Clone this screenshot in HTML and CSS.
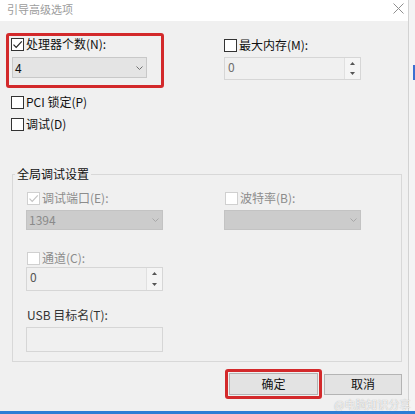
FILE: index.html
```html
<!DOCTYPE html>
<html lang="zh-CN">
<head>
<meta charset="utf-8">
<title>引导高级选项</title>
<link rel="stylesheet" href="styles.css">
</head>
<body>
<div class="screen">
  <div class="frame">
    <div class="window">
      <div class="titlebar">
        <span class="title">引导高级选项</span>
        <svg class="close" viewBox="0 0 11 11"><path d="M0.5 0.5L10.5 10.5M10.5 0.5L0.5 10.5" stroke="#8f8f8f" stroke-width="1" fill="none"/></svg>
      </div>
      <div class="content">
        <div class="top">
          <div class="col-left">
            <div class="hl hl-proc">
              <div class="cb-row">
                <span class="cb"><svg viewBox="0 0 11 11"><path d="M1.5 5.6L4.2 8.3L9.8 2.4" stroke="#222" stroke-width="1.2" fill="none"/></svg></span>
                <span>处理器个数(N):</span>
              </div>
              <div class="combo combo-proc">
                <span>4</span>
                <svg class="chev" viewBox="0 0 7 4"><path d="M0.5 0.5L3.5 3.5L6.5 0.5" stroke="#707070" stroke-width="1" fill="none"/></svg>
              </div>
            </div>
            <div class="cb-row row-pci"><span class="cb"></span><span>PCI 锁定(P)</span></div>
            <div class="cb-row row-dbg"><span class="cb"></span><span>调试(D)</span></div>
          </div>
          <div class="col-right">
            <div class="cb-row"><span class="cb"></span><span>最大内存(M):</span></div>
            <div class="spin spin-mem">
              <span class="spin-val">0</span>
              <span class="spin-btns">
                <span class="spin-b"><svg viewBox="0 0 5 3"><path d="M0 3L2.5 0L5 3Z" fill="#555"/></svg></span>
                <span class="spin-b"><svg viewBox="0 0 5 3"><path d="M0 0L5 0L2.5 3Z" fill="#555"/></svg></span>
              </span>
            </div>
          </div>
        </div>

        <fieldset class="group">
          <legend>全局调试设置</legend>
          <div class="gcols">
            <div class="gcol">
              <div class="cb-row"><span class="cb cb-dis"><svg viewBox="0 0 11 11"><path d="M1.5 5.6L4.2 8.3L9.8 2.4" stroke="#c4c4c4" stroke-width="1.2" fill="none"/></svg></span><span class="dis">调试端口(E):</span></div>
              <div class="combo combo-dis">
                <span>1394</span>
                <svg class="chev" viewBox="0 0 7 4"><path d="M0.5 0.5L3.5 3.5L6.5 0.5" stroke="#a8a8a8" stroke-width="1" fill="none"/></svg>
              </div>
              <div class="cb-row row-ch"><span class="cb cb-dis"></span><span class="dis">通道(C):</span></div>
              <div class="spin spin-ch">
                <span class="spin-val">0</span>
                <span class="spin-btns">
                  <span class="spin-b"><svg viewBox="0 0 5 3"><path d="M0 3L2.5 0L5 3Z" fill="#555"/></svg></span>
                  <span class="spin-b"><svg viewBox="0 0 5 3"><path d="M0 0L5 0L2.5 3Z" fill="#555"/></svg></span>
                </span>
              </div>
              <div class="cb-row row-usb"><span class="usb">USB 目标名(T):</span></div>
              <div class="textbox"></div>
            </div>
            <div class="gcol">
              <div class="cb-row"><span class="cb cb-dis"></span><span class="dis">波特率(B):</span></div>
              <div class="combo combo-dis">
                <span></span>
                <svg class="chev" viewBox="0 0 7 4"><path d="M0.5 0.5L3.5 3.5L6.5 0.5" stroke="#a8a8a8" stroke-width="1" fill="none"/></svg>
              </div>
            </div>
          </div>
        </fieldset>

        <div class="buttons">
          <div class="hl hl-ok"><button class="btn btn-ok">确定</button></div>
          <button class="btn btn-cancel">取消</button>
        </div>
      </div>
    </div>
    <div class="strip"><span class="strip-mark"></span></div>
  </div>
  <div class="taskline"></div>
  <span class="watermark">@电脑知识分享</span>
</div>
</body>
</html>
```
FILE: styles.css
```css
body {
  margin: 0;
  font-family: "Microsoft YaHei", "Noto Sans CJK SC", "Noto Sans", sans-serif;
  font-size: 12px;
  color: #111;
}

.screen {
  position: relative;
  width: 415px;
  height: 414px;
  overflow: hidden;
  background: #f0f0f0;
}

.frame {
  display: flex;
  height: 411px;
}

.window {
  width: 409px;
  border-right: 1px solid #d2d2d2;
  box-sizing: border-box;
  background: #f0f0f0;
}

.titlebar {
  height: 21px;
  background: #fff;
  display: flex;
  justify-content: space-between;
  align-items: flex-start;
}

.title {
  color: #9c9c9c;
  font-size: 11px;
  line-height: 18px;
  padding-left: 7px;
}

.close {
  width: 11px;
  height: 11px;
  margin: 3px 4px 0 0;
}

.content {
  height: 390px;
  padding-left: 6px;
  box-sizing: border-box;
}

.top {
  display: flex;
  align-items: flex-start;
}

.hl {
  border: 3px solid #d3292b;
  border-radius: 3px;
  box-sizing: border-box;
}

.hl-proc {
  width: 158px;
  margin-top: 12px;
  padding: 0 0 7px 2px;
}

.cb-row {
  display: flex;
  align-items: center;
  gap: 2px;
  height: 16px;
  line-height: 16px;
  white-space: nowrap;
}

.cb {
  width: 13px;
  height: 13px;
  box-sizing: border-box;
  border: 1px solid #333;
  background: #fff;
  display: flex;
  flex: none;
}

.cb svg {
  width: 11px;
  height: 11px;
}

.cb-dis {
  border-color: #d0d0d0;
}

.dis {
  color: #8c8c8c;
}

.row-pci {
  margin: 6px 0 0 5px;
}

.row-dbg {
  margin: 6px 0 0 5px;
}

.combo {
  display: flex;
  align-items: center;
  justify-content: space-between;
  box-sizing: border-box;
  border: 1px solid #c8c8c8;
  background: #e4e4e4;
  padding: 0 3px 0 2px;
  line-height: 16px;
}

.chev {
  width: 7px;
  height: 4px;
}

.combo-proc {
  width: 135px;
  height: 21px;
  margin: 5px 0 0 1px;
}

.col-right {
  margin: 16px 0 0 60px;
}

.spin {
  display: flex;
  box-sizing: border-box;
  border: 1px solid #d6d6d6;
  background: #f0f0f0;
}

.spin-val {
  flex: 1;
  padding-left: 3px;
  line-height: 18px;
  color: #6e6e6e;
}

.spin-btns {
  width: 15px;
  display: flex;
  flex-direction: column;
  border-left: 1px solid #e0e0e0;
  background: #f5f5f5;
}

.spin-b {
  flex: 1;
  display: flex;
  align-items: center;
  justify-content: center;
}

.spin-b svg {
  width: 5px;
  height: 3px;
}

.spin-mem {
  width: 137px;
  height: 23px;
  margin-top: 4px;
}

.group {
  margin: 35px 0 0 6px;
  padding: 0 0 9px 0;
  width: 390px;
  box-sizing: border-box;
  border: 1px solid #d8d8d8;
  min-inline-size: 0;
}

.group legend {
  padding: 0 2px;
  margin-left: 2px;
  line-height: 14px;
  font-size: 12px;
  color: #111;
}

.gcols {
  display: flex;
  align-items: flex-start;
  gap: 61px;
  padding: 9px 0 0 13px;
}

.gcol {
  width: 137px;
  display: flex;
  flex-direction: column;
}

.gcol .cb-row {
  padding-left: 1px;
}

.combo-dis {
  height: 20px;
  margin-top: 4px;
  background: #cccccc;
  border-color: #c3c3c3;
  color: #8a8a8a;
}

.row-ch {
  margin-top: 20px;
}

.spin-ch {
  height: 24px;
  margin-top: 1px;
}

.spin-ch .spin-val {
  color: #555;
}

.row-usb {
  margin-top: 16px;
}

.usb {
  color: #333;
}

.textbox {
  height: 25px;
  margin-top: 4px;
  box-sizing: border-box;
  border: 1px solid #d6d6d6;
  background: #f0f0f0;
}

.buttons {
  display: flex;
  justify-content: flex-end;
  align-items: center;
  gap: 2px;
  padding-right: 6px;
  margin-top: 7px;
}

.hl-ok {
  width: 97px;
  height: 30px;
  padding: 1px;
}

.btn {
  box-sizing: border-box;
  border: 1px solid #b4b4b4;
  background: #e3e3e3;
  font-family: inherit;
  font-size: 12px;
  color: #111;
  padding: 0;
  line-height: 16px;
}

.btn-ok {
  width: 100%;
  height: 100%;
}

.btn-cancel {
  width: 78px;
  height: 21px;
}

.strip {
  flex: 1;
  background: #f4f4f4;
}

.strip-mark {
  display: block;
  width: 2px;
  height: 15px;
  margin: 65px 0 0 4px;
  background: #3b6fd1;
}

.taskline {
  height: 3px;
  background: #2c7dd5;
}

.watermark {
  position: absolute;
  left: 334px;
  top: 398px;
  font-size: 11px;
  line-height: 12px;
  color: rgba(255, 255, 255, 0.85);
  text-shadow: 0 0 1px #9a9a9a;
}
```
